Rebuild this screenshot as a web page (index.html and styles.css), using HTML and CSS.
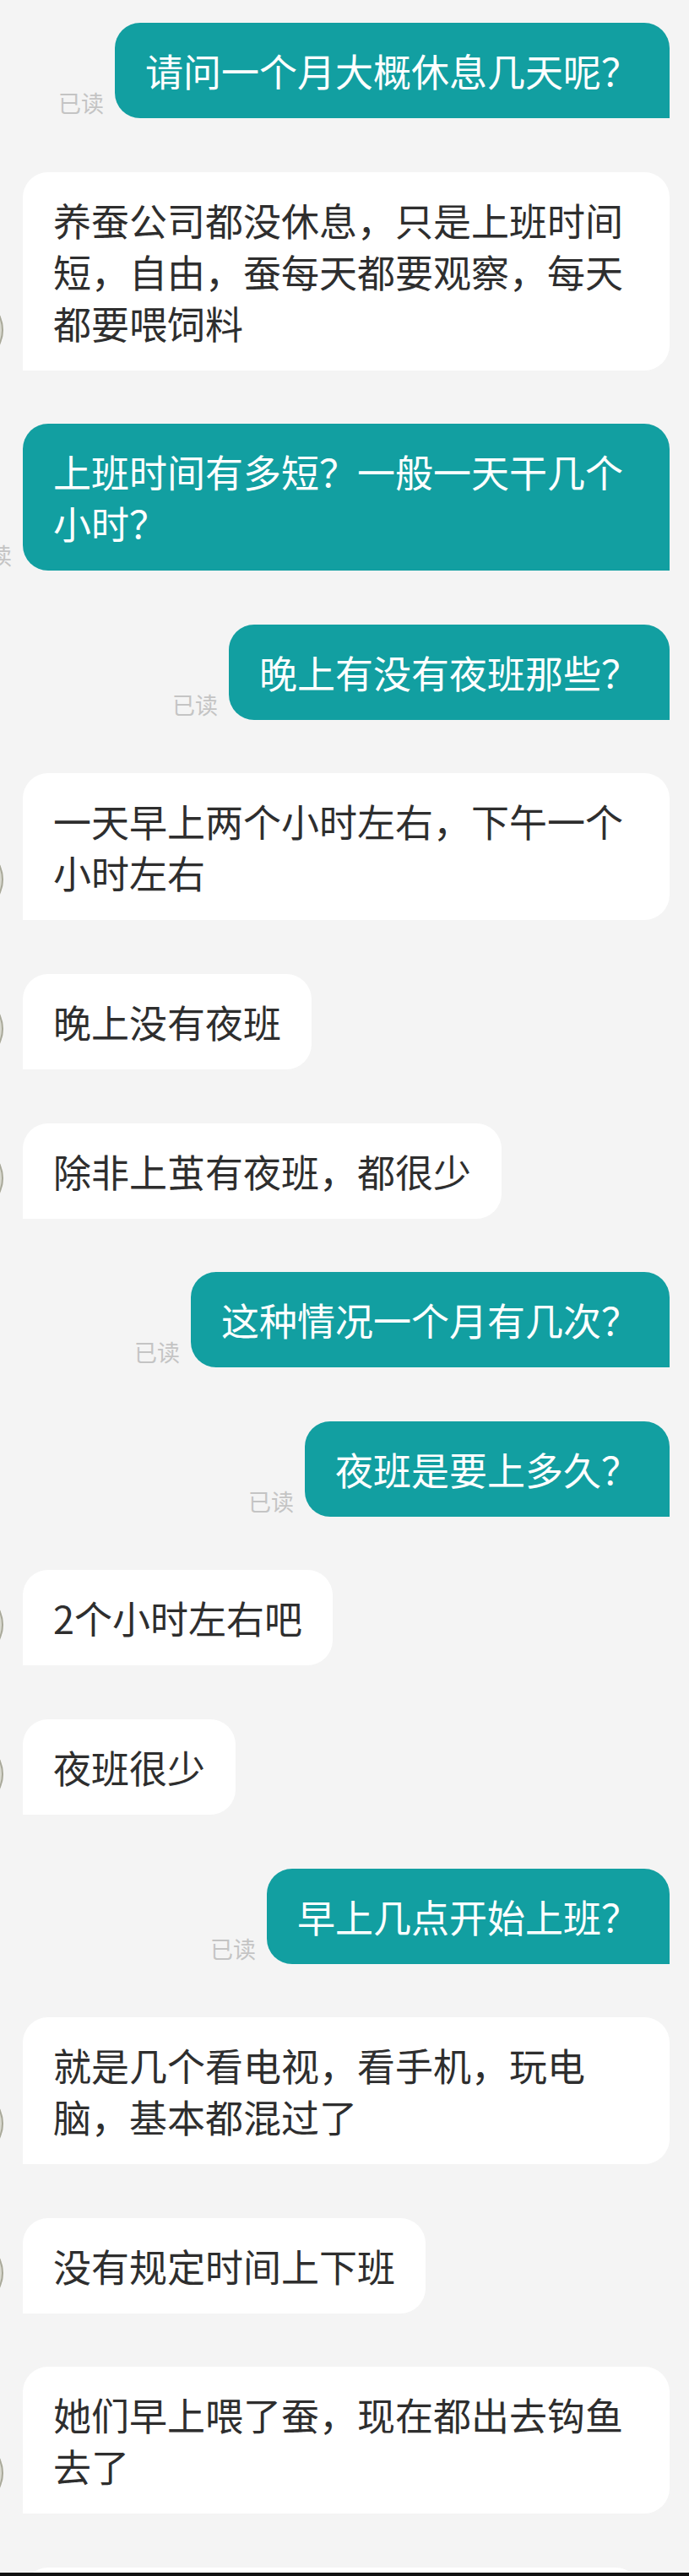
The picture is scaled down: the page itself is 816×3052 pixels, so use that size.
FILE: index.html
```html
<!DOCTYPE html>
<html lang="zh-CN">
<head>
<meta charset="utf-8">
<title>聊天记录</title>
<link rel="stylesheet" href="styles.css">
</head>
<body>
<div class="screen">
  <main class="chat">
    <div class="row sent">
      <span class="read">已读</span>
      <div class="bubble">请问一个月大概休息几天呢？</div>
    </div>
    <div class="row recv">
      <div class="avatar"></div>
      <div class="bubble">养蚕公司都没休息，只是上班时间短，自由，蚕每天都要观察，每天都要喂饲料</div>
    </div>
    <div class="row sent">
      <span class="read">已读</span>
      <div class="bubble">上班时间有多短？一般一天干几个小时？</div>
    </div>
    <div class="row sent">
      <span class="read">已读</span>
      <div class="bubble">晚上有没有夜班那些？</div>
    </div>
    <div class="row recv">
      <div class="avatar"></div>
      <div class="bubble">一天早上两个小时左右，下午一个小时左右</div>
    </div>
    <div class="row recv">
      <div class="avatar"></div>
      <div class="bubble">晚上没有夜班</div>
    </div>
    <div class="row recv">
      <div class="avatar"></div>
      <div class="bubble">除非上茧有夜班，都很少</div>
    </div>
    <div class="row sent">
      <span class="read">已读</span>
      <div class="bubble">这种情况一个月有几次？</div>
    </div>
    <div class="row sent">
      <span class="read">已读</span>
      <div class="bubble">夜班是要上多久？</div>
    </div>
    <div class="row recv">
      <div class="avatar"></div>
      <div class="bubble">2个小时左右吧</div>
    </div>
    <div class="row recv">
      <div class="avatar"></div>
      <div class="bubble">夜班很少</div>
    </div>
    <div class="row sent">
      <span class="read">已读</span>
      <div class="bubble">早上几点开始上班？</div>
    </div>
    <div class="row recv">
      <div class="avatar"></div>
      <div class="bubble">就是几个看电视，看手机，玩电脑，基本都混过了</div>
    </div>
    <div class="row recv">
      <div class="avatar"></div>
      <div class="bubble">没有规定时间上下班</div>
    </div>
    <div class="row recv">
      <div class="avatar"></div>
      <div class="bubble">她们早上喂了蚕，现在都出去钩鱼去了</div>
    </div>
    <div class="row recv">
      <div class="avatar"></div>
      <div class="bubble bubble-next"></div>
    </div>
  </main>
</div>
<div class="nav-bar"></div>
</body>
</html>
```

FILE: styles.css
```css
html, body {
  margin: 0;
  padding: 0;
}

body {
  width: 816px;
  background: #f4f4f4;
  font-family: "Noto Sans CJK SC", "Noto Sans", sans-serif;
}

.screen {
  height: 3048px;
  overflow: hidden;
}

.chat {
  display: flex;
  flex-direction: column;
  gap: 63.6px;
  padding: 27px 23px 0 27px;
}

.row {
  display: flex;
  align-items: flex-end;
}

.row.sent {
  justify-content: flex-end;
  gap: 13px;
}

.row.recv {
  justify-content: flex-start;
  gap: 23px;
}

.bubble {
  flex-shrink: 0;
  box-sizing: border-box;
  max-width: 766px;
  padding: 26px 36px;
  font-size: 45px;
  line-height: 61px;
  word-break: break-all;
}

.sent .bubble {
  background: #129fa1;
  color: #ffffff;
  border-radius: 30px 30px 0 30px;
}

.recv .bubble {
  background: #ffffff;
  color: #2e2e2e;
  border-radius: 30px 30px 30px 0;
}

.bubble-next {
  width: 732px;
  height: 113px;
}

.read {
  flex-shrink: 0;
  font-size: 27px;
  line-height: 27px;
  margin-bottom: 5px;
  color: #c4c4c4;
  white-space: nowrap;
}

.avatar {
  flex-shrink: 0;
  width: 80px;
  height: 80px;
  margin-left: -103px;
  margin-bottom: 8px;
  border-radius: 50%;
  background: #d9d9cf;
  box-shadow: inset 0 0 0 2px #a9a99a;
}

.nav-bar {
  height: 4px;
  background: #111111;
}
```
